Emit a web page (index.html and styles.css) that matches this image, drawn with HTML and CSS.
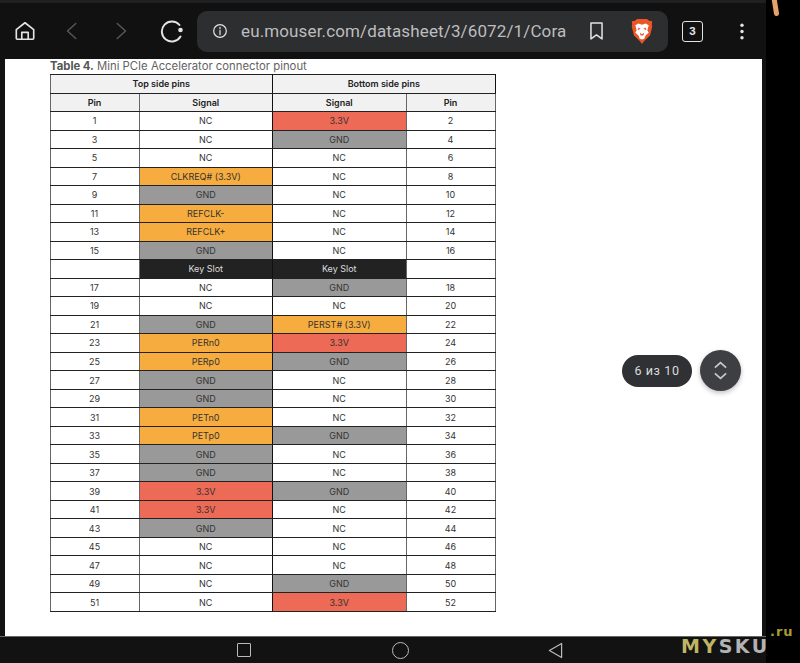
FILE: index.html
```html
<!DOCTYPE html>
<html lang="ru">
<head>
<meta charset="utf-8">
<title>Mini PCIe Accelerator connector pinout</title>
<link rel="stylesheet" href="styles.css">
</head>
<body>
<div class="screen">
  <div class="frame">
    <header class="toolbar">
      <svg class="ico home" viewBox="0 0 24 24"><path d="M2.500 10.500 12 3l9.500 7.500V20a1 1 0 0 1-1 1h-17a1 1 0 0 1-1-1z M8.500 21v-7.500h7V21"/></svg>
      <svg class="ico nav-b" viewBox="0 0 24 24"><path d="M17 2 6 12l11 10"/></svg>
      <svg class="ico nav-f" viewBox="0 0 24 24"><path d="M7 2l11 10L7 22"/></svg>
      <svg class="ico reload" viewBox="0 0 24 24"><path d="M19.500 6A10 10 0 1 0 20.500 17.500"/><circle class="dot" cx="20.500" cy="11" r="2.300"/></svg>
      <div class="urlbar">
        <svg class="ico info" viewBox="0 0 24 24"><circle cx="12" cy="12" r="9.500"/><path d="M12 11v6.500M12 6.500v2"/></svg>
        <span class="url">eu.mouser.com/datasheet/3/6072/1/Cora</span>
        <svg class="ico mark" viewBox="0 0 24 24"><path d="M5 2h14v20l-7-5-7 5z"/></svg>
        <svg class="brave" viewBox="0 0 24 28"><path class="shield" d="M6.500 0h11l2.500 2 3.500.5-.5 3.500.5 2.500-2.500 10-6.500 6L12 28l-2.500-3.500-6.500-6L.5 8.500 1 6 .5 2.500 4 2z"/><path class="face" d="M4.500 7 8 5l4 1.500L16 5l3.500 2-1.500 5.500 1.500 3-3.500 3-1.500 3.500-2.500 1-2.500-1L8 18.500l-3.500-3 1.500-3z"/><path class="nose" d="M8 9.500l2.500 1.500L7 12.500zM16 9.500 13.500 11l3.500 1.500zM9.500 15 12 17l2.500-2-1 3.500h-3z"/></svg>
      </div>
      <span class="tabs">3</span>
      <svg class="menu" viewBox="0 0 6 22"><circle cx="3" cy="3" r="2.200"/><circle cx="3" cy="11" r="2.200"/><circle cx="3" cy="19" r="2.200"/></svg>
    </header>

    <main class="doc">
      <p class="caption"><b>Table 4.</b> Mini PCIe Accelerator connector pinout</p>
      <table class="pins">
        <colgroup><col class="c-pin"><col class="c-sig"><col class="c-sig"><col class="c-pin"></colgroup>
        <thead>
          <tr><th colspan="2">Top side pins</th><th colspan="2">Bottom side pins</th></tr>
          <tr><th>Pin</th><th>Signal</th><th>Signal</th><th>Pin</th></tr>
        </thead>
        <tbody>
          <tr><td>1</td><td>NC</td><td class="pwr">3.3V</td><td>2</td></tr>
          <tr><td>3</td><td>NC</td><td class="gnd">GND</td><td>4</td></tr>
          <tr><td>5</td><td>NC</td><td>NC</td><td>6</td></tr>
          <tr><td>7</td><td class="sig">CLKREQ# (3.3V)</td><td>NC</td><td>8</td></tr>
          <tr><td>9</td><td class="gnd">GND</td><td>NC</td><td>10</td></tr>
          <tr><td>11</td><td class="sig">REFCLK-</td><td>NC</td><td>12</td></tr>
          <tr><td>13</td><td class="sig">REFCLK+</td><td>NC</td><td>14</td></tr>
          <tr><td>15</td><td class="gnd">GND</td><td>NC</td><td>16</td></tr>
          <tr><td></td><td class="key">Key Slot</td><td class="key">Key Slot</td><td></td></tr>
          <tr><td>17</td><td>NC</td><td class="gnd">GND</td><td>18</td></tr>
          <tr><td>19</td><td>NC</td><td>NC</td><td>20</td></tr>
          <tr><td>21</td><td class="gnd">GND</td><td class="sig">PERST# (3.3V)</td><td>22</td></tr>
          <tr><td>23</td><td class="sig">PERn0</td><td class="pwr">3.3V</td><td>24</td></tr>
          <tr><td>25</td><td class="sig">PERp0</td><td class="gnd">GND</td><td>26</td></tr>
          <tr><td>27</td><td class="gnd">GND</td><td>NC</td><td>28</td></tr>
          <tr><td>29</td><td class="gnd">GND</td><td>NC</td><td>30</td></tr>
          <tr><td>31</td><td class="sig">PETn0</td><td>NC</td><td>32</td></tr>
          <tr><td>33</td><td class="sig">PETp0</td><td class="gnd">GND</td><td>34</td></tr>
          <tr><td>35</td><td class="gnd">GND</td><td>NC</td><td>36</td></tr>
          <tr><td>37</td><td class="gnd">GND</td><td>NC</td><td>38</td></tr>
          <tr><td>39</td><td class="pwr">3.3V</td><td class="gnd">GND</td><td>40</td></tr>
          <tr><td>41</td><td class="pwr">3.3V</td><td>NC</td><td>42</td></tr>
          <tr><td>43</td><td class="gnd">GND</td><td>NC</td><td>44</td></tr>
          <tr><td>45</td><td>NC</td><td>NC</td><td>46</td></tr>
          <tr><td>47</td><td>NC</td><td>NC</td><td>48</td></tr>
          <tr><td>49</td><td>NC</td><td class="gnd">GND</td><td>50</td></tr>
          <tr><td>51</td><td>NC</td><td class="pwr">3.3V</td><td>52</td></tr>
        </tbody>
      </table>
      <div class="pager">
        <span class="count">6 из 10</span>
        <span class="jump">
          <svg viewBox="0 0 16 22"><path d="M2 8 8 2.500 14 8M2 14l6 5.500 6-5.500"/></svg>
        </span>
      </div>
    </main>

    <footer class="navbar">
      <span class="square"></span>
      <span class="circle"></span>
      <svg class="back" viewBox="0 0 16 18"><path d="M14.500 1.500v15L1.500 9z"/></svg>
    </footer>
  </div>

  <svg class="scribble" viewBox="0 0 10 18"><path d="M3 -2 5.500 13.500"/></svg>
  <div class="watermark"><span class="wm-my">MY</span><span class="wm-sku">SKU</span><span class="wm-ru">.ru</span></div>
</div>
</body>
</html>
```
FILE: styles.css
```css
* { box-sizing: border-box; }
html, body { margin: 0; height: 100%; background: #000; }
.screen {
  position: relative;
  width: 800px;
  height: 663px;
  overflow: hidden;
  background: #000;
  font-family: "Inter", "Liberation Sans", sans-serif;
}
.frame {
  width: 766px;
  height: 663px;
  background: #121212;
  display: flex;
  flex-direction: column;
}
.toolbar {
  height: 59px;
  flex: none;
  background: #111112;
  border-top: 3px solid #1f2022;
  display: flex;
  align-items: center;
  padding: 0 0 0 14px;
}
.ico { fill: none; stroke: #e4e4e4; stroke-width: 1.8; stroke-linecap: round; stroke-linejoin: round; flex: none; }
.home { width: 22px; height: 22px; }
.nav-b, .nav-f { width: 18px; height: 22px; stroke: #56575a; stroke-width: 2; }
.nav-b { margin-left: 27px; }
.nav-f { margin-left: 31px; }
.reload { width: 24px; height: 24px; margin-left: 30px; stroke-width: 1.9; }
.reload .dot { fill: #e4e4e4; stroke: none; }
.urlbar {
  width: 471px;
  height: 41px;
  margin-left: 13px;
  background: #2d2e30;
  border-radius: 10px;
  display: flex;
  align-items: center;
  padding-left: 15px;
}
.info { width: 16px; height: 16px; }
.url { width: 328px; margin-left: 13px; font-size: 17px; color: #bdbdbf; white-space: nowrap; font-family: "Roboto", sans-serif; letter-spacing: .13px; }
.mark { width: 19px; height: 22px; margin-left: 18px; stroke-width: 1.9; }
.brave { width: 22px; height: 25px; margin-left: 25px; flex: none; }
.shield { fill: #ec5526; }
.face { fill: #fff; }
.nose { fill: #ec5526; }
.tabs {
  width: 21px; height: 21px; margin-left: 14px;
  border: 1.5px solid #e4e4e4; border-radius: 3px;
  color: #e4e4e4; font-size: 10.5px; font-weight: 700;
  display: flex; align-items: center; justify-content: center;
}
.menu { width: 6px; height: 17px; margin-left: 36px; fill: #e4e4e4; flex: none; }
.doc {
  position: relative;
  width: 757px;
  height: 577px;
  margin-left: 5px;
  flex: none;
  background: #fff;
  padding: 0 0 0 44.500px;
}
.caption { margin: 0; height: 15px; font-size: 11.300px; line-height: 14px; color: #636363; white-space: nowrap; padding-left: .5px; }
.caption b { color: #555; font-weight: 700; }
.pins {
  border-collapse: collapse;
  table-layout: fixed;
  width: 445px;
  height: 537.500px;
  font-size: 9px;
  color: #333;
  text-align: center;
  border: 1.500px solid #666;
}
.c-pin { width: 89px; }
.c-sig { width: 133.500px; }
.pins tr { height: 18.520px; }
.pins th, .pins td { padding: 0; border: 1px solid #222; border-left-color: #666; border-right-color: #666; font-weight: 400; }
.pins tr > :nth-child(2) { border-right-color: #111; }
.pins th { background: #f1f1f1; color: #222; font-weight: 600; }
.pins thead tr:first-child th:first-child { border-right-color: #111; }
.sig { background: #f6ac3e; }
.pwr { background: #ec6a56; }
.gnd { background: #999; }
.pins .key { background: #222; color: #ddd; }
.pager {
  position: absolute;
  left: 617px;
  top: 291px;
  display: flex;
  align-items: center;
  gap: 8px;
}
.count {
  width: 70px; height: 32px;
  border-radius: 16px;
  background: #303134;
  color: #ddd;
  font: 12.500px "Roboto", sans-serif;
  letter-spacing: .6px;
  display: flex; align-items: center; justify-content: center;
}
.jump {
  width: 41px; height: 41px;
  border-radius: 50%;
  background: #3e3f42;
  box-shadow: 0 2px 5px rgba(0,0,0,.25);
  display: flex; align-items: center; justify-content: center;
}
.jump svg { width: 15px; height: 21px; fill: none; stroke: #c9c9c9; stroke-width: 1.800; }
.navbar {
  flex: 1;
  background: #121212;
  border-top: 1px solid #666;
  display: flex;
  align-items: center;
  padding-left: 237px;
}
.square { width: 14px; height: 14px; border: 1.500px solid #bbb; border-radius: 1px; }
.circle { width: 17px; height: 17px; margin-left: 141px; border: 1.500px solid #bbb; border-radius: 50%; }
.back { width: 15px; height: 17px; margin-left: 139px; fill: none; stroke: #bbb; stroke-width: 1.300; stroke-linejoin: round; }
.scribble { position: absolute; left: 771px; top: 0; width: 10px; height: 18px; fill: none; stroke: #e8a268; stroke-width: 5; stroke-linecap: round; }
.watermark { position: absolute; left: 681px; top: 634px; font: 700 19px "DejaVu Sans", sans-serif; letter-spacing: 2.500px; white-space: nowrap; line-height: 24px; }
.wm-my { color: #bfb563; }
.wm-sku { color: #b3b3b3; }
.wm-ru { position: absolute; left: 89px; top: -14px; font-size: 13px; font-weight: 700; letter-spacing: 1px; color: #a89e35; }
```
